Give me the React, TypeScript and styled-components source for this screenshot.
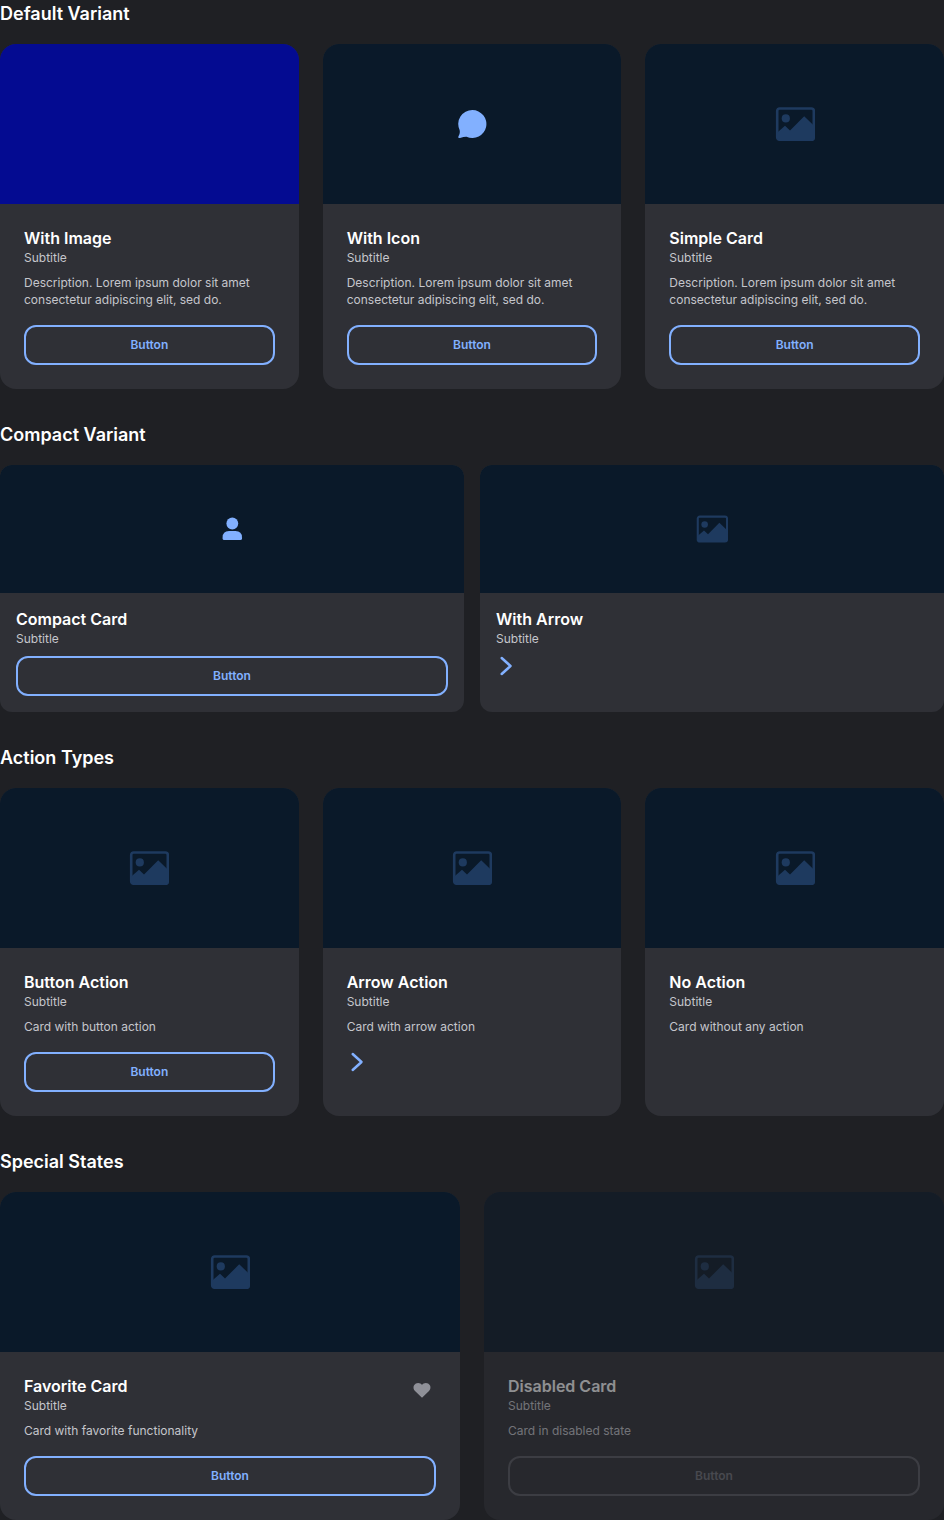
import React from "react";
import styled, { createGlobalStyle, css } from "styled-components";

const GlobalStyle = createGlobalStyle`
  *, *::before, *::after { box-sizing: border-box; }
  body {
    margin: 0;
    background: #1f2024;
    color: #ffffff;
    font-family: Inter, "Liberation Sans", sans-serif;
  }
`;

const Page = styled.main`
  display: flex;
  flex-direction: column;
  gap: 32px;
`;

const Section = styled.section`
  display: flex;
  flex-direction: column;
  gap: 16px;
`;

const SectionTitle = styled.h2`
  margin: 0;
  font-size: 18px;
  line-height: 28px;
  font-weight: 600;
`;

const CardGrid = styled.div<{ $columns: number; $gap: number }>`
  display: grid;
  grid-template-columns: repeat(${(p) => p.$columns}, minmax(0, 1fr));
  gap: ${(p) => p.$gap}px;
`;

const CardFrame = styled.article<{ $compact: boolean; $disabled: boolean }>`
  display: flex;
  flex-direction: column;
  overflow: hidden;
  background: #2f3036;
  border-radius: ${(p) => (p.$compact ? 12 : 16)}px;
  ${(p) =>
    p.$disabled &&
    css`
      opacity: 0.5;
    `}
`;

const Media = styled.div<{ $compact: boolean; $fill?: string }>`
  display: flex;
  align-items: center;
  justify-content: center;
  height: ${(p) => (p.$compact ? 128 : 160)}px;
  background: ${(p) => p.$fill ?? "#0a1929"};
`;

const Body = styled.div<{ $compact: boolean }>`
  display: flex;
  flex-direction: column;
  padding: ${(p) => (p.$compact ? 16 : 24)}px;
`;

const Header = styled.header`
  display: flex;
  align-items: flex-start;
  justify-content: space-between;
`;

const Title = styled.h3`
  margin: 0 0 1px;
  font-size: 16px;
  line-height: 20px;
  font-weight: 600;
`;

const Subtitle = styled.p`
  margin: 0;
  font-size: 12px;
  line-height: 17px;
  color: #c5c6cc;
`;

const Description = styled.p`
  margin: 8px 0 0;
  font-size: 12px;
  line-height: 17px;
  color: #c5c6cc;
`;

const Action = styled.div<{ $compact: boolean }>`
  display: flex;
  margin-top: ${(p) => (p.$compact ? 9 : 17)}px;
`;

const OutlineButton = styled.button`
  flex: 1;
  height: 40px;
  padding: 0 16px 2px;
  border: 2px solid #82b0ff;
  border-radius: 12px;
  background: transparent;
  color: #82b0ff;
  font-family: inherit;
  font-size: 12px;
  font-weight: 600;
  cursor: pointer;

  &:disabled {
    border-color: #5a5b62;
    color: #71727a;
    cursor: not-allowed;
  }
`;

const IconButton = styled.button<{ $size: number; $color: string }>`
  display: flex;
  align-items: center;
  justify-content: center;
  flex: none;
  width: ${(p) => p.$size}px;
  height: ${(p) => p.$size}px;
  padding: 0;
  border: 0;
  background: transparent;
  color: ${(p) => p.$color};
  cursor: pointer;
`;

const PictureIcon = ({ size }: { size: number }) => (
  <svg width={size} height={size} viewBox="0 0 40 40" aria-hidden="true">
    <rect x="2.2" y="4.5" width="36.6" height="31.2" rx="2.4" fill="none" stroke="#1e3a5f" strokeWidth="2.6" />
    <circle cx="10.8" cy="14.4" r="4.1" fill="#1e3a5f" />
    <path d="M2 28.8 10 21.8 15 26.6 29.2 12.200 39 21.700V34.500Q39 36.200 37 36.200H4Q2 36.200 2 34Z" fill="#1e3a5f" />
  </svg>
);

const ChatIcon = () => (
  <svg width="32" height="32" viewBox="0 0 32 32" aria-hidden="true">
    <path
      d="M16.4 2A14.1 14 0 1 1 10.6 28.8Q8.4 28.6 4 30Q2 30.4 2.4 28.6Q4.4 25.6 3.6 22A14.1 14 0 0 1 16.4 2Z"
      fill="#82b0ff"
    />
  </svg>
);

const PersonIcon = () => (
  <svg width="24" height="24" viewBox="0 0 24 24" aria-hidden="true">
    <circle cx="12.3" cy="6.500" r="5.900" fill="#82b0ff" />
    <path d="M2.600 20.500Q2.600 14 9 14H15.400Q22 14 22 20.500V21.400Q22 23 20.400 23H4.200Q2.600 23 2.600 21.400Z" fill="#82b0ff" />
  </svg>
);

const ChevronIcon = () => (
  <svg width="20" height="20" viewBox="0 0 20 20" fill="none" aria-hidden="true">
    <path d="M5.700 2 14.500 10 5.700 18" stroke="currentColor" strokeWidth="2.500" strokeLinecap="round" strokeLinejoin="round" />
  </svg>
);

const HeartIcon = () => (
  <svg width="20" height="20" viewBox="0 0 20 20" aria-hidden="true">
    <path
      d="M10 17.800 3 11C.600 8.600 1.300 4.900 3.900 3.500 6 2.400 8.700 3 10 4.900 11.300 3 14 2.400 16.100 3.500 18.700 4.900 19.400 8.600 17 11Z"
      fill="currentColor"
    />
  </svg>
);

type CardProps = {
  title: string;
  description?: string;
  compact?: boolean;
  disabled?: boolean;
  favorite?: boolean;
  action?: "button" | "arrow" | "none";
  fill?: string;
  icon?: React.ReactNode;
};

const Card = ({
  title,
  description,
  compact = false,
  disabled = false,
  favorite = false,
  action = "button",
  fill,
  icon,
}: CardProps) => (
  <CardFrame $compact={compact} $disabled={disabled}>
    <Media $compact={compact} $fill={fill}>
      {!fill && (icon ?? <PictureIcon size={compact ? 32 : 40} />)}
    </Media>
    <Body $compact={compact}>
      <Header>
        <div>
          <Title>{title}</Title>
          <Subtitle>Subtitle</Subtitle>
        </div>
        {favorite && (
          <IconButton type="button" $size={28} $color="#8f9098" aria-label="Add to favorites">
            <HeartIcon />
          </IconButton>
        )}
      </Header>
      {description && <Description>{description}</Description>}
      {action === "button" && (
        <Action $compact={compact}>
          <OutlineButton type="button" disabled={disabled}>
            Button
          </OutlineButton>
        </Action>
      )}
      {action === "arrow" && (
        <Action $compact={compact}>
          <IconButton type="button" $size={20} $color="#82b0ff" aria-label={`Open ${title}`}>
            <ChevronIcon />
          </IconButton>
        </Action>
      )}
    </Body>
  </CardFrame>
);

const LOREM = "Description. Lorem ipsum dolor sit amet consectetur adipiscing elit, sed do.";

export default function App() {
  return (
    <>
      <GlobalStyle />
      <Page>
        <Section>
          <SectionTitle>Default Variant</SectionTitle>
          <CardGrid $columns={3} $gap={24}>
            <Card title="With Image" description={LOREM} fill="#040b91" />
            <Card title="With Icon" description={LOREM} icon={<ChatIcon />} />
            <Card title="Simple Card" description={LOREM} />
          </CardGrid>
        </Section>
        <Section>
          <SectionTitle>Compact Variant</SectionTitle>
          <CardGrid $columns={2} $gap={16}>
            <Card compact title="Compact Card" icon={<PersonIcon />} />
            <Card compact title="With Arrow" action="arrow" />
          </CardGrid>
        </Section>
        <Section>
          <SectionTitle>Action Types</SectionTitle>
          <CardGrid $columns={3} $gap={24}>
            <Card title="Button Action" description="Card with button action" />
            <Card title="Arrow Action" description="Card with arrow action" action="arrow" />
            <Card title="No Action" description="Card without any action" action="none" />
          </CardGrid>
        </Section>
        <Section>
          <SectionTitle>Special States</SectionTitle>
          <CardGrid $columns={2} $gap={24}>
            <Card title="Favorite Card" description="Card with favorite functionality" favorite />
            <Card title="Disabled Card" description="Card in disabled state" disabled />
          </CardGrid>
        </Section>
      </Page>
    </>
  );
}
